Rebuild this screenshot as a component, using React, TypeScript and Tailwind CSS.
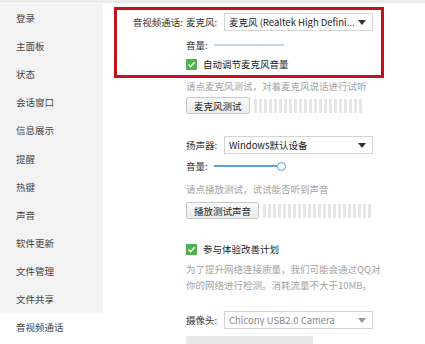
import React from "react";

const items = ["登录", "主面板", "状态", "会话窗口", "信息展示", "提醒", "热键", "声音", "软件更新", "文件管理", "文件共享", "音视频通话"];

function Caret({ gray }: { gray?: boolean }) {
  return (
    <svg width="8" height="5" viewBox="0 0 8 5" className="shrink-0">
      <polygon points="0,0 8,0 4,5" fill={gray ? "#9a9a9a" : "#333"} />
    </svg>
  );
}

function Select({ text, gray }: { text: string; gray?: boolean }) {
  return (
    <div className="flex h-[18px] w-[149px] items-center justify-between border border-[#d4d4d4] bg-white pl-[4px] pr-[6px]">
      <span className={"truncate " + (gray ? "text-[#8a8a8a]" : "text-[#222]")}>{text}</span>
      <Caret gray={gray} />
    </div>
  );
}

function Check() {
  return (
    <div className="flex h-[11px] w-[11px] items-center justify-center rounded-[1px] bg-[#4db34a]">
      <svg width="9" height="9" viewBox="0 0 9 9">
        <polyline points="1.5,4.6 3.6,6.7 7.6,2.2" fill="none" stroke="#fff" strokeWidth="1.6" />
      </svg>
    </div>
  );
}

function Bars({ count }: { count: number }) {
  return (
    <div className="flex h-[14px] gap-[2px]">
      {Array.from({ length: count }).map((_, i) => (
        <div key={i} className="h-full w-[3px] bg-[#e6e6e6]" />
      ))}
    </div>
  );
}

function Btn({ text }: { text: string }) {
  return (
    <div className="flex h-[17px] items-center rounded-[2px] border border-[#c9c9c9] bg-gradient-to-b from-[#fafafa] to-[#ececec] px-[7px] text-[#222]">
      {text}
    </div>
  );
}

export default function App() {
  return (
    <div
      className="flex h-[344px] w-[425px] flex-col overflow-hidden bg-white text-[9.5px] leading-[12px] text-[#333]"
      style={{ fontFamily: '"Noto Sans CJK SC", "Noto Sans", sans-serif' }}
    >
      <div className="h-[3px] w-full shrink-0 bg-[#ebebeb]" />
      <div className="flex flex-1">
        <div className="flex w-[103px] shrink-0 flex-col pt-[1px]">
          {items.map((t, i) => (
            <div
              key={t}
              className={
                "flex h-[28.1px] shrink-0 items-center pl-[16px] text-[#444] " +
                (i === items.length - 1 ? "bg-white" : "bg-[#f3f3f3]")
              }
            >
              {t}
            </div>
          ))}
          <div className="flex-1 bg-white" />
        </div>
        <div className="relative flex-1">
          <div className="flex pt-[10px]">
            <div className="w-[83px] shrink-0 pr-[3px] pt-[3px] text-right text-[#333]">音视频通话:</div>
            <div className="flex flex-col">
              <div className="flex items-center">
                <span className="w-[38px] shrink-0">麦克风:</span>
                <Select text="麦克风 (Realtek High Defini..." />
              </div>
              <div className="mt-[8px] flex h-[12px] items-center">
                <span className="w-[28px] shrink-0">音量:</span>
                <div className="h-[2px] w-[70px] bg-[#bcd8ef]" />
              </div>
              <div className="mt-[7px] flex h-[12px] items-center gap-[6px]">
                <Check />
                <span className="text-[#222]">自动调节麦克风音量</span>
              </div>
              <div className="mt-[10px] text-[#a3a3a3]">请点麦克风测试，对着麦克风说话进行试听</div>
              <div className="mt-[5px] flex items-center gap-[4px]">
                <Btn text="麦克风测试" />
                <Bars count={22} />
              </div>
              <div className="mt-[22px] flex items-center">
                <span className="w-[38px] shrink-0">扬声器:</span>
                <Select text="Windows默认设备" />
              </div>
              <div className="mt-[6px] flex h-[12px] items-center">
                <span className="w-[28px] shrink-0">音量:</span>
                <div className="h-[2px] w-[63px] bg-[#5b9fdb]" />
                <div className="h-[9px] w-[9px] rounded-full border border-[#5b9fdb] bg-white" />
              </div>
              <div className="mt-[11px] text-[#a3a3a3]">请点播放测试，试试能否听到声音</div>
              <div className="mt-[7px] flex items-center gap-[4px]">
                <div className="flex h-[18px]">
                  <Btn text="播放测试声音" />
                </div>
                <Bars count={22} />
              </div>
              <div className="mt-[23px] flex h-[12px] items-center gap-[6px]">
                <Check />
                <span className="text-[#222]">参与体验改善计划</span>
              </div>
              <div className="mt-[6px] w-[200px] leading-[16px] text-[#a3a3a3]">
                为了提升网络连接质量，我们可能会通过QQ对
                <br />
                你的网络进行检测。消耗流量不大于10MB。
              </div>
              <div className="mt-[18px] flex items-center">
                <span className="w-[38px] shrink-0">摄像头:</span>
                <Select text="Chicony USB2.0 Camera" gray />
              </div>
              <div className="mt-[7px] h-[20px] w-[127px] bg-[#e8e8e8]" />
            </div>
          </div>
          <div className="pointer-events-none absolute left-[11px] top-[4px] h-[71px] w-[270px] border-[3px] border-[#c4111b]" />
        </div>
      </div>
    </div>
  );
}
